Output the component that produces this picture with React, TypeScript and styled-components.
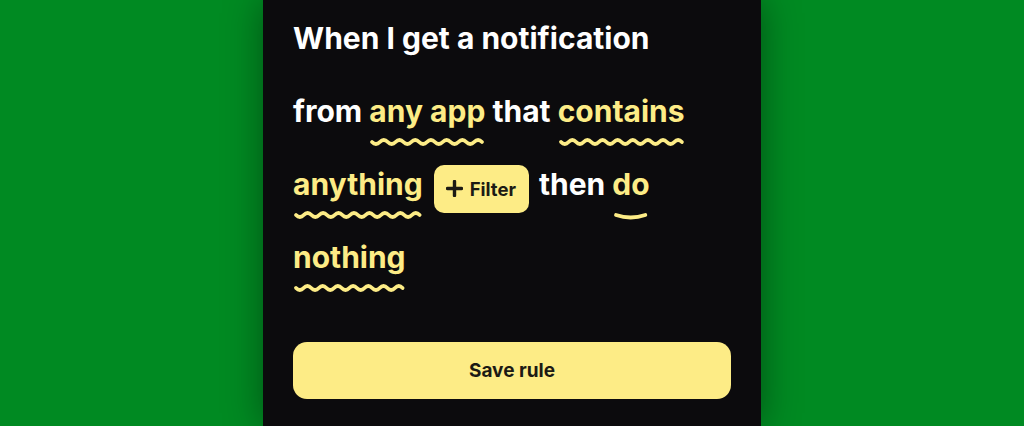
import * as React from 'react'
import styled, { createGlobalStyle } from 'styled-components'

const yellow = '#fdec86'
const ink = '#1c1a14'

const GlobalStyle = createGlobalStyle`
  html, body {
    margin: 0;
    padding: 0;
    height: 100%;
    background: #008a22;
  }
  body {
    font-family: Inter, "Noto Sans", "Liberation Sans", sans-serif;
    overflow: hidden;
  }
`

const Stage = styled.div`
  height: 426px;
  display: flex;
  justify-content: center;
`

const Panel = styled.div`
  width: 498px;
  box-sizing: border-box;
  height: 426px;
  padding: 2px 30px 0 30px;
  background: #0c0b0d;
  box-shadow: 0 0 36px rgba(0, 0, 0, 0.4);
  display: flex;
  flex-direction: column;
`

const Sentence = styled.div`
  font-size: 30px;
  font-weight: 700;
  line-height: 73px;
  color: #ffffff;
`

const Line = styled.div``

const Token = styled.span`
  position: relative;
  color: ${yellow};
`

const WaveBox = styled.svg<{ $inset: number }>`
  position: absolute;
  left: ${p => p.$inset}px;
  top: 100%;
  margin-top: 10px;
  height: 6px;
  width: calc(100% - ${p => p.$inset * 2}px);
  overflow: visible;
`

const FilterButton = styled.button`
  display: inline-flex;
  align-items: center;
  gap: 7px;
  height: 48px;
  padding: 0 13px 0 12px;
  margin: 0 10px 0 11px;
  vertical-align: middle;
  position: relative;
  top: 2px;
  border: none;
  border-radius: 10px;
  background: ${yellow};
  color: ${ink};
  font-family: inherit;
  font-size: 18.5px;
  font-weight: 700;
`

const SaveButton = styled.button`
  margin-top: 48px;
  height: 57px;
  border: none;
  border-radius: 14px;
  background: ${yellow};
  color: ${ink};
  font-family: inherit;
  font-size: 19px;
  font-weight: 700;
`

function Squiggle({ halves, inset = 3, amp = 4 }: { halves: number; inset?: number; amp?: number }) {
  // halves = number of half waves drawn across the word
  const w = halves * 10
  let d = 'M0 3'
  for (let i = 0; i < halves; i++) {
    const y = i % 2 === 0 ? 3 + amp : 3 - amp
    d += ` Q${i * 10 + 5} ${y} ${(i + 1) * 10} 3`
  }
  return (
    <WaveBox $inset={inset} viewBox={`0 0 ${w} 6`} preserveAspectRatio="none">
      <path
        d={d}
        fill="none"
        stroke={yellow}
        strokeWidth={3.8}
        strokeLinecap="round"
        vectorEffect="non-scaling-stroke"
      />
    </WaveBox>
  )
}

function Word({ children, halves, inset, amp }: { children: React.ReactNode; halves: number; inset?: number; amp?: number }) {
  return (
    <Token>
      {children}
      <Squiggle halves={halves} inset={inset} amp={amp} />
    </Token>
  )
}

function PlusIcon() {
  return (
    <svg width="17" height="17" viewBox="0 0 17 17">
      <path d="M8.5 1.5v14M1.5 8.5h14" stroke={ink} strokeWidth="3.4" strokeLinecap="round" />
    </svg>
  )
}

export default function App() {
  return (
    <Stage>
      <GlobalStyle />
      <Panel>
        <Sentence>
          <Line>When I get a notification</Line>
          <Line>
            from <Word halves={14}>any app</Word> that <Word halves={16}>contains</Word>{' '}
            <Word halves={16}>anything</Word>
            <FilterButton>
              <PlusIcon />
              Filter
            </FilterButton>
            then <Word halves={1} inset={4} amp={5}>do</Word> <Word halves={14}>nothing</Word>
          </Line>
        </Sentence>
        <SaveButton>Save rule</SaveButton>
      </Panel>
    </Stage>
  )
}
